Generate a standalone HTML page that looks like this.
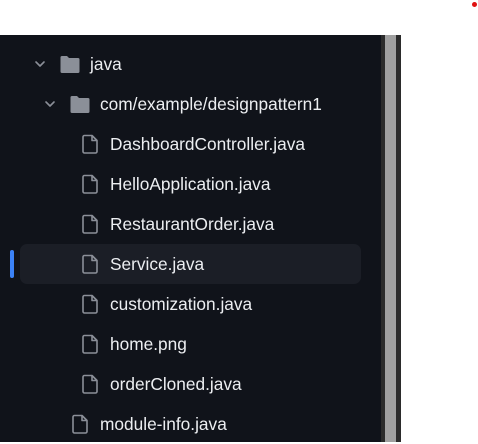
<!DOCTYPE html>
<html><head><style>
body{margin:0;width:478px;height:442px;background:#fff;position:relative;overflow:hidden;font-family:"Liberation Sans",sans-serif}
.panel{position:absolute;left:0;top:35px;width:381px;height:407px;background:#10131a}
.s1{position:absolute;left:381px;top:35px;width:4px;height:407px;background:#2b2b2b}
.s2{position:absolute;left:385px;top:35px;width:11px;height:407px;background:#a0a0a0}
.s3{position:absolute;left:396px;top:35px;width:5px;height:407px;background:#2b2b2b}
.row{position:absolute;height:40px;line-height:40px;color:#eceef1;font-size:17.3px;white-space:nowrap}
.sel{position:absolute;left:20px;top:244px;width:341px;height:40px;background:#1b1e26;border-radius:7px}
.bar{position:absolute;left:10px;top:250px;width:4px;height:28px;background:#3b82f6;border-radius:2px}
svg{position:absolute}
.dot{position:absolute;left:472px;top:2px;width:5px;height:5px;border-radius:50%;background:#e01010}
</style></head><body>
<div class="dot"></div>
<div class="panel"></div><div class="s1"></div><div class="s2"></div><div class="s3"></div>
<div class="sel"></div><div class="bar"></div>
<svg width="478" height="442" style="left:0;top:0">
<g fill="none" stroke="#8b8f98" stroke-width="1.6" stroke-linecap="round" stroke-linejoin="round">
<path d="M36 62l4 4 4-4"/><path d="M46 102l4 4 4-4"/>
</g>
<g fill="#8b8f98">
<path d="M61 56h6l2 2h9a1.5 1.5 0 0 1 1.5 1.5v12a1.5 1.5 0 0 1-1.5 1.5h-16a1.5 1.5 0 0 1-1.5-1.5v-14a1.5 1.5 0 0 1 1.5-1.5z"/>
<path d="M71 96h6l2 2h9a1.5 1.5 0 0 1 1.5 1.5v12a1.5 1.5 0 0 1-1.5 1.5h-16a1.5 1.5 0 0 1-1.5-1.5v-14a1.5 1.5 0 0 1 1.5-1.5z"/>
</g>
<g fill="none" stroke="#8b8f98" stroke-width="1.6" stroke-linejoin="round">
<path id="f" d="M84.5 135.5h7.5l5 5v11a1.5 1.5 0 0 1-1.5 1.5h-11a1.5 1.5 0 0 1-1.5-1.5v-14.5a1.5 1.5 0 0 1 1.5-1.5z M92 135.5v5h5"/>
<use href="#f" y="40"/><use href="#f" y="80"/><use href="#f" y="120"/><use href="#f" y="160"/><use href="#f" y="200"/><use href="#f" y="240"/><use href="#f" x="-10" y="280"/>
</g>
</svg>
<div class="row" style="left:90px;top:44px">java</div>
<div class="row" style="left:100px;top:84px">com/example/designpattern1</div>
<div class="row" style="left:110px;top:124px">DashboardController.java</div>
<div class="row" style="left:110px;top:164px">HelloApplication.java</div>
<div class="row" style="left:110px;top:204px">RestaurantOrder.java</div>
<div class="row" style="left:110px;top:244px">Service.java</div>
<div class="row" style="left:110px;top:284px">customization.java</div>
<div class="row" style="left:110px;top:324px">home.png</div>
<div class="row" style="left:110px;top:364px">orderCloned.java</div>
<div class="row" style="left:100px;top:404px">module-info.java</div>
</body></html>
